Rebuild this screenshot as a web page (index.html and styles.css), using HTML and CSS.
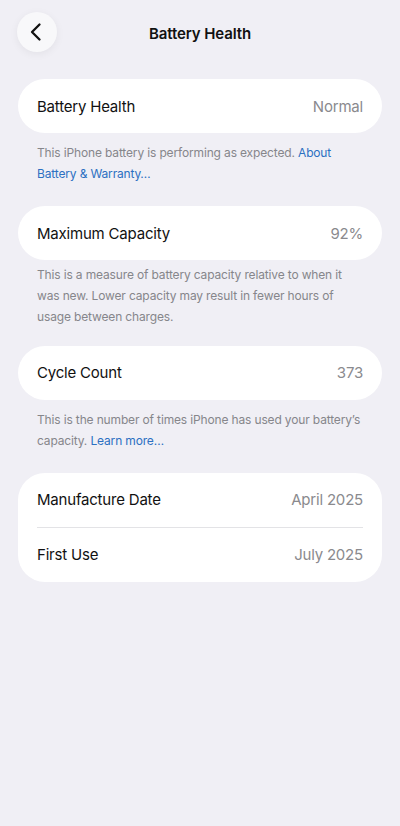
FILE: index.html
```html
<!DOCTYPE html>
<html lang="en">
<head>
<meta charset="utf-8">
<title>Battery Health</title>
<link rel="stylesheet" href="styles.css">
</head>
<body>
<header class="topbar">
  <button class="back" aria-label="Back">
    <svg width="14" height="20" viewBox="0 0 14 20"><path d="M10.5 2.5 L3 10 L10.5 17.5" fill="none" stroke="#111" stroke-width="2.3" stroke-linecap="round" stroke-linejoin="round"/></svg>
  </button>
  <h1 class="title">Battery Health</h1>
  <span class="spacer"></span>
</header>
<main class="content">
  <section class="group">
    <div class="card">
      <div class="row"><span class="label">Battery Health</span><span class="value">Normal</span></div>
    </div>
    <p class="footer">This iPhone battery is performing as expected. <a href="#">About Battery &amp; Warranty…</a></p>
  </section>
  <section class="group">
    <div class="card">
      <div class="row"><span class="label">Maximum Capacity</span><span class="value">92%</span></div>
    </div>
    <p class="footer footer-tight">This is a measure of battery capacity relative to when it was new. Lower capacity may result in fewer hours of usage between charges.</p>
  </section>
  <section class="group group-close">
    <div class="card">
      <div class="row"><span class="label">Cycle Count</span><span class="value">373</span></div>
    </div>
    <p class="footer">This is the number of times iPhone has used your battery’s capacity. <a href="#">Learn more…</a></p>
  </section>
  <section class="group">
    <div class="card">
      <div class="row"><span class="label">Manufacture Date</span><span class="value">April 2025</span></div>
      <div class="divider"></div>
      <div class="row"><span class="label">First Use</span><span class="value">July 2025</span></div>
    </div>
  </section>
</main>
</body>
</html>
```
FILE: styles.css
```css
* { box-sizing: border-box; }
html, body {
  margin: 0;
  padding: 0;
  background: #f0eff5;
  font-family: Inter, "Noto Sans", "Liberation Sans", sans-serif;
  color: #111;
}
.topbar {
  display: grid;
  grid-template-columns: 40px 1fr 40px;
  align-items: center;
  padding: 12px 17px 0;
  height: 52px;
}
.back {
  width: 40px;
  height: 40px;
  border-radius: 50%;
  border: none;
  background: #f8f8fa;
  box-shadow: 0 2px 8px rgba(0,0,0,0.06);
  display: flex;
  align-items: center;
  justify-content: center;
  padding: 0 3px 0 0;
}
.title {
  margin: 0;
  text-align: center;
  font-size: 15px;
  font-weight: 600;
  letter-spacing: -0.1px;
  padding-top: 3px;
}
.content {
  padding: 27px 18px 0;
  display: flex;
  flex-direction: column;
  gap: 22px;
}
.group-close { margin-top: -3px; }
.card {
  background: #fff;
  border-radius: 27px;
  padding: 0 19px;
}
.row {
  height: 54px;
  display: flex;
  align-items: center;
  justify-content: space-between;
  font-size: 15px;
  letter-spacing: -0.2px;
}
.label { color: #111; }
.value { color: #8a8a8e; }
.divider {
  height: 1px;
  background: #e3e3e6;
}
.footer {
  margin: 9px 0 0;
  padding: 0 18px 0 19px;
  font-size: 12px;
  line-height: 21px;
  color: #86868b;
  letter-spacing: -0.15px;
}
.footer-tight { margin-top: 3.5px; }
.footer a {
  color: #2c70c2;
  text-decoration: none;
}
```
